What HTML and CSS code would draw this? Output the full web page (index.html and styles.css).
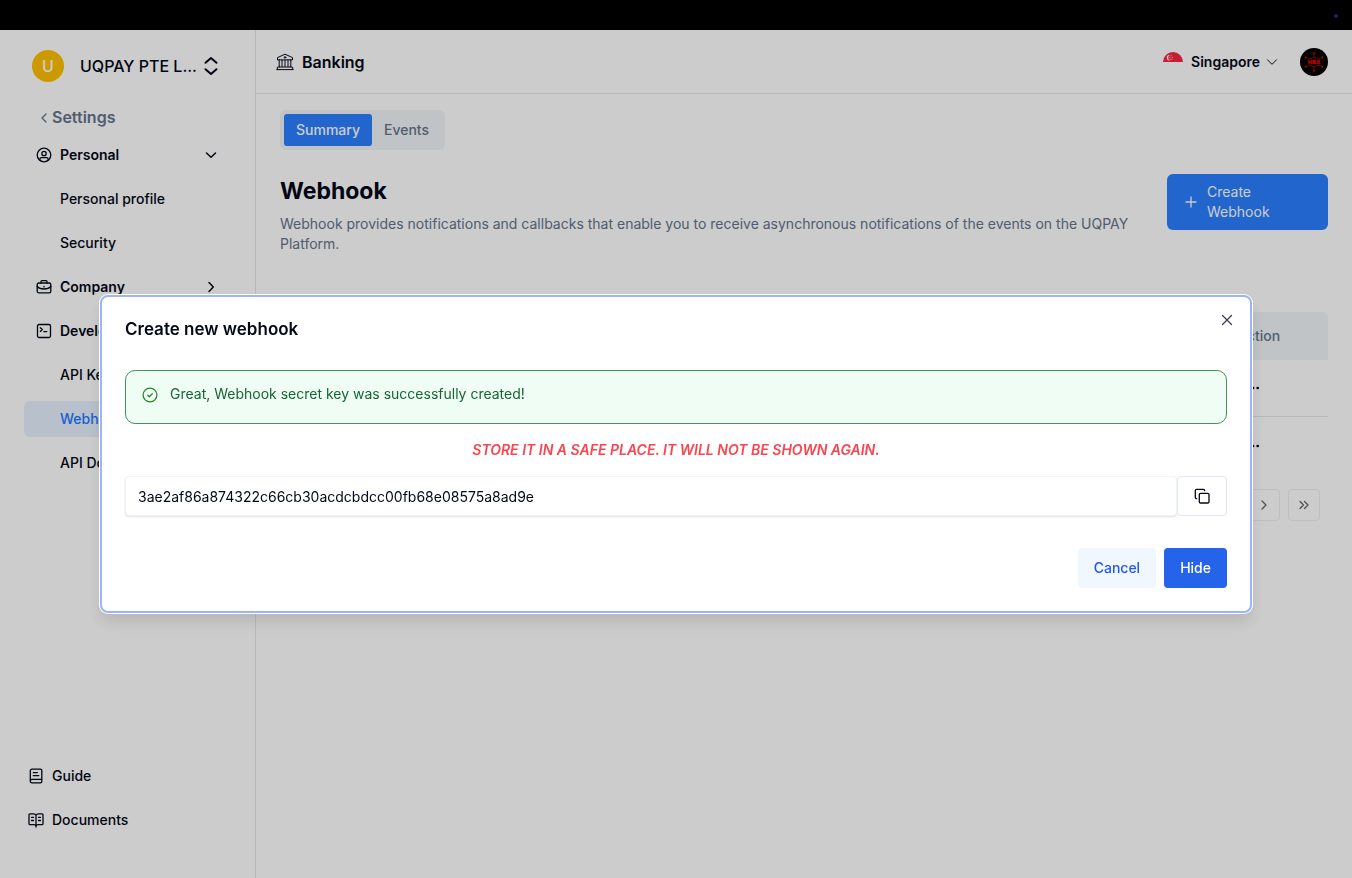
FILE: index.html
```html
<!DOCTYPE html>
<html lang="en">
<head>
<meta charset="utf-8">
<meta name="viewport" content="width=device-width, initial-scale=1">
<title>Webhook</title>
<link rel="stylesheet" href="styles.css">
</head>
<body>
<div class="topbar"><span class="topbar-dot"></span></div>
<div class="shell">
	<aside class="sidebar">
		<button type="button" class="org">
			<span class="org-avatar">U</span>
			<span class="org-name">UQPAY PTE L...</span>
			<svg class="icon org-sort" viewBox="0 0 16 20"><path d="M2.500 6.800L8 2l5.500 4.800M2.500 13.200L8 18l5.500-4.800"/></svg>
		</button>
		<a class="back" href="#">
			<svg class="icon back-icon" viewBox="0 0 8 12"><path d="M6 2L2 6l4 4"/></svg>
			Settings
		</a>
		<nav class="menu">
			<a class="menu-item menu-group" href="#">
				<svg class="icon" viewBox="0 0 16 16"><circle cx="8" cy="8" r="6.8"/><circle cx="8" cy="6.5" r="2.2"/><path d="M3.8 13v-.6c0-1 .8-1.8 1.8-1.8h4.8c1 0 1.8.8 1.8 1.8v.6"/></svg>
				<span class="menu-label">Personal</span>
				<svg class="icon menu-arrow" viewBox="0 0 16 16"><path d="M3.500 6L8 10.300 12.500 6"/></svg>
			</a>
			<a class="menu-item menu-sub" href="#">Personal profile</a>
			<a class="menu-item menu-sub" href="#">Security</a>
			<a class="menu-item menu-group" href="#">
				<svg class="icon" viewBox="0 0 16 16"><rect x="1.2" y="4" width="13.6" height="9.8" rx="1.6"/><path d="M5 4V2.6c0-.6.4-1 1-1h4c.6 0 1 .4 1 1V4M1.2 7.5c1.5 1.7 4 2.5 6.8 2.5s5.3-.8 6.8-2.5M8 7.500v.4"/></svg>
				<span class="menu-label">Company</span>
				<svg class="icon menu-arrow" viewBox="0 0 16 16"><path d="M6 3.500L10.300 8 6 12.500"/></svg>
			</a>
			<a class="menu-item menu-group" href="#">
				<svg class="icon" viewBox="0 0 16 16"><rect x="1.5" y="1.5" width="13" height="13" rx="1.5"/><path d="M4.300 4.800l2 1.800-2 1.800M7.800 8.600h3"/></svg>
				<span class="menu-label">Developer</span>
				<svg class="icon menu-arrow" viewBox="0 0 16 16"><path d="M3.500 6L8 10.300 12.500 6"/></svg>
			</a>
			<a class="menu-item menu-sub" href="#">API Keys</a>
			<a class="menu-item menu-sub active" href="#">Webhook</a>
			<a class="menu-item menu-sub" href="#">API Docs</a>
		</nav>
		<nav class="links">
			<a class="link" href="#">
				<svg class="icon" viewBox="0 0 16 16"><path d="M4 1.2h8.500c.8 0 1.300.5 1.300 1.300v11c0 .8-.5 1.300-1.300 1.300H4c-1 0-1.700-.7-1.700-1.600V2.900c0-1 .7-1.700 1.700-1.700zM2.300 13c0-1 .7-1.600 1.700-1.600h9.800M5.300 4.600h4M5.300 7.600h5.500"/></svg>
				Guide
			</a>
			<a class="link" href="#">
				<svg class="icon" viewBox="0 0 16 16"><path d="M8 3.200C7.500 2.300 6.700 1.800 5.600 1.800H2c-.6 0-1 .4-1 1v8.900c0 .6.4 1 1 1h4c1 0 1.600.4 2 1.300.4-.9 1-1.300 2-1.300h4c.6 0 1-.4 1-1V2.800c0-.6-.4-1-1-1h-3.600C9.300 1.800 8.500 2.300 8 3.200zM8 3.200V15M3.500 5.300h2M3.500 8.500h2M10.500 5.300h2M10.500 8.500h2"/></svg>
				Documents
			</a>
		</nav>
	</aside>
	<div class="page">
		<header class="header">
			<svg class="icon bank-icon" viewBox="0 0 18 18"><path d="M1.500 6.500V4.600L9 1.200l7.500 3.400v1.900zM3.200 6.500V14M6 7v6.500M9 7v6.500M12 7v6.500M14.800 6.500V14M2 14h14M.8 16.600h16.400M1.300 14.500v2M16.700 14.500v2"/><circle cx="9" cy="4.400" r=".8"/></svg>
			<span class="header-title">Banking</span>
			<button type="button" class="country">
				<svg class="flag" viewBox="0 0 20 20">
					<circle cx="10" cy="10" r="10" fill="#fff"/>
					<path d="M0 10a10 10 0 0 1 20 0z" fill="#f8263f"/>
					<path d="M6.800 2.800a3 3 0 1 0 0 6 3.600 3.600 0 0 1 0-6z" fill="#fff"/>
					<g fill="#fff"><circle cx="8" cy="3.800" r=".5"/><circle cx="6.800" cy="5.500" r=".5"/><circle cx="9.300" cy="5.500" r=".5"/><circle cx="7.200" cy="7.200" r=".5"/><circle cx="8.900" cy="7.200" r=".5"/></g>
				</svg>
				Singapore
				<svg class="icon country-arrow" viewBox="0 0 12 12"><path d="M1.500 3.800L6 8.300l4.500-4.500"/></svg>
			</button>
			<a class="user" href="#" aria-label="Account">
				<svg viewBox="0 0 28 28">
					<circle cx="14" cy="14" r="14" fill="#000"/>
					<g fill="none" stroke="#e60000" stroke-width=".7">
						<path d="M14 5.500V9M14 19v3.500M6 9.500l3 1.700M22 9.500l-3 1.700M6 18.500l3-1.700M22 18.500l-3-1.700"/>
						<path d="M9 11.200L14 9l5 2.200M9 16.800l5 2.200 5-2.200"/>
						<path stroke-width="1.300" d="M9 12v4M11.800 12v4M9 14h2.800M16 12.600h-2.500v2.800H16M13.500 14h2.300M17 12l3 4M20 12l-3 4"/>
					</g>
					<g fill="#e60000"><circle cx="14" cy="5.200" r="1"/><circle cx="14" cy="22.800" r="1"/><circle cx="5.700" cy="9.300" r="1"/><circle cx="22.300" cy="9.300" r="1"/><circle cx="5.700" cy="18.700" r="1"/><circle cx="22.300" cy="18.700" r="1"/></g>
				</svg>
			</a>
		</header>
		<main class="main">
			<div class="tabs" role="tablist">
				<button type="button" class="tab selected" role="tab" aria-selected="true">Summary</button>
				<button type="button" class="tab" role="tab" aria-selected="false">Events</button>
			</div>
			<div class="intro">
				<div class="intro-text">
					<h1>Webhook</h1>
					<p>Webhook provides notifications and callbacks that enable you to receive asynchronous notifications of the events on the UQPAY Platform.</p>
				</div>
				<button type="button" class="create">
					<svg class="icon" viewBox="0 0 16 16"><path d="M8 3v10M3 8h10"/></svg>
					<span>Create<br>Webhook</span>
				</button>
			</div>
			<table class="list">
				<thead>
					<tr><th></th><th class="action">Action</th></tr>
				</thead>
				<tbody>
					<tr><td></td><td class="action"><button type="button" class="more" aria-label="More"><svg viewBox="0 0 24 24"><circle cx="5" cy="12" r="2"/><circle cx="12" cy="12" r="2"/><circle cx="19" cy="12" r="2"/></svg></button></td></tr>
					<tr><td></td><td class="action"><button type="button" class="more" aria-label="More"><svg viewBox="0 0 24 24"><circle cx="5" cy="12" r="2"/><circle cx="12" cy="12" r="2"/><circle cx="19" cy="12" r="2"/></svg></button></td></tr>
				</tbody>
			</table>
			<div class="pager">
				<button type="button" class="pager-btn" aria-label="Next page"><svg class="icon" viewBox="0 0 16 16"><path d="M6 4l4 4-4 4"/></svg></button>
				<button type="button" class="pager-btn" aria-label="Last page"><svg class="icon" viewBox="0 0 16 16"><path d="M4 4.500L7.500 8 4 11.500M8.500 4.500L12 8l-3.500 3.500"/></svg></button>
			</div>
		</main>
	</div>
</div>

<div class="overlay">
	<div class="dialog" role="dialog" aria-labelledby="dialog-title">
		<button type="button" class="close" aria-label="Close"><svg class="icon" viewBox="0 0 16 16"><path d="M3.500 3.500l9 9M12.500 3.500l-9 9"/></svg></button>
		<h2 id="dialog-title">Create new webhook</h2>
		<div class="alert">
			<svg class="icon" viewBox="0 0 16 16"><circle cx="8" cy="8" r="6.900"/><path d="M5.800 8.200l1.500 1.500 3-3"/></svg>
			<p>Great, Webhook secret key was successfully created!</p>
		</div>
		<p class="warning">STORE IT IN A SAFE PLACE. IT WILL NOT BE SHOWN AGAIN.</p>
		<div class="secret">
			<input type="text" class="secret-key" aria-label="Webhook secret key" value="3ae2af86a874322c66cb30acdcbdcc00fb68e08575a8ad9e" readonly>
			<button type="button" class="copy" aria-label="Copy"><svg class="icon" viewBox="0 0 16 16"><rect x="5.300" y="5.300" width="9.700" height="9.700" rx="1.300"/><path d="M2.700 10.700C2 10.700 1.300 10 1.300 9.300V2.700c0-.7.7-1.400 1.400-1.400h6.600c.7 0 1.400.7 1.400 1.400"/></svg></button>
		</div>
		<div class="buttons">
			<button type="button" class="btn cancel">Cancel</button>
			<button type="button" class="btn hide">Hide</button>
		</div>
	</div>
</div>
</body>
</html>
```
FILE: styles.css
```css
* {
	box-sizing: border-box;
}

body {
	display: flex;
	flex-direction: column;
	min-height: 100vh;
	margin: 0;
	background: #fff;
	color: #020817;
	font-family: Inter, "Liberation Sans", sans-serif;
	font-size: 14px;
	line-height: 20px;
}

h1, h2, p {
	margin: 0;
}

a {
	color: inherit;
	text-decoration: none;
}

button {
	padding: 0;
	border: 0;
	background: none;
	color: inherit;
	font: inherit;
	cursor: pointer;
}

svg {
	display: block;
	flex-shrink: 0;
}

.icon {
	width: 16px;
	height: 16px;
	fill: none;
	stroke: currentColor;
	stroke-width: 1.3;
	stroke-linecap: round;
	stroke-linejoin: round;
}

/* top strip */
.topbar {
	display: flex;
	align-items: center;
	justify-content: flex-end;
	height: 30px;
	padding: 2px 14px 0 0;
	background: #000;
}

.topbar-dot {
	width: 4px;
	height: 4px;
	border-radius: 50%;
	background: #2b1d66;
}

.shell {
	display: flex;
	flex: 1;
}

/* sidebar */
.sidebar {
	display: flex;
	flex-direction: column;
	width: 256px;
	padding: 20px 24px 40px;
	border-right: 1px solid #e2e8f0;
}

.org {
	display: flex;
	align-items: center;
	gap: 16px;
	height: 32px;
	padding: 0 12px 0 8px;
	font-size: 16px;
	font-weight: 500;
	text-align: left;
}

.org-avatar {
	flex-shrink: 0;
	width: 32px;
	height: 32px;
	border-radius: 50%;
	background: #ffc000;
	color: #fff;
	line-height: 32px;
	text-align: center;
}

.org-name {
	flex: 1;
	min-width: 0;
	white-space: nowrap;
}

.org-sort {
	height: 20px;
	margin-left: -8px;
	stroke-width: 2;
}

.back {
	display: flex;
	align-items: center;
	gap: 4px;
	margin-top: 24px;
	padding-left: 16px;
	color: #64748b;
	font-size: 16px;
	font-weight: 600;
	line-height: 23px;
}

.back-icon {
	width: 8px;
	height: 12px;
}

.menu {
	display: flex;
	flex-direction: column;
	gap: 8px;
	margin-top: 8px;
}

.menu-item {
	display: flex;
	align-items: center;
	gap: 8px;
	height: 36px;
	padding: 0 12px;
	border-radius: 6px;
	font-weight: 500;
}

.menu-group {
	font-weight: 600;
}

.menu-label {
	flex: 1;
}

.menu-arrow {
	stroke-width: 1.5;
}

.menu-sub {
	padding-left: 36px;
}

.menu-item.active {
	background: #e6f0ff;
	color: #2079ff;
}

.links {
	display: flex;
	flex-direction: column;
	gap: 8px;
	margin-top: auto;
}

.link {
	display: flex;
	align-items: center;
	gap: 8px;
	height: 36px;
	padding-left: 4px;
	font-weight: 500;
}

/* page */
.page {
	flex: 1;
	min-width: 0;
}

.header {
	display: flex;
	align-items: center;
	height: 64px;
	padding: 0 24px 0 20px;
	border-bottom: 1px solid #e2e8f0;
}

.bank-icon {
	width: 18px;
	height: 18px;
	stroke-width: 1;
}

.header-title {
	flex: 1;
	margin-left: 8px;
	font-size: 16px;
	font-weight: 600;
}

.country {
	display: flex;
	align-items: center;
	gap: 8px;
	font-weight: 600;
}

.flag {
	width: 20px;
	height: 20px;
}

.country-arrow {
	width: 12px;
	height: 12px;
	margin-left: -2px;
	stroke-width: 1;
}

.user {
	width: 28px;
	height: 28px;
	margin-left: 22px;
}

.main {
	padding: 16px 24px;
}

.tabs {
	display: inline-flex;
	height: 40px;
	padding: 4px;
	border-radius: 6px;
	background: #f1f5f9;
}

.tab {
	padding: 0 12px;
	border-radius: 3px;
	color: #64748b;
	font-weight: 500;
}

.tab.selected {
	background: #2b7fff;
	color: #fff;
}

.intro {
	display: grid;
	grid-template-columns: 1fr 161px;
	gap: 16px;
	margin-top: 18px;
}

.intro-text h1 {
	margin-top: 6px;
	font-size: 23px;
	font-weight: 700;
	line-height: 34px;
}

.intro-text p {
	margin-top: 6px;
	color: #64748b;
}

.create {
	display: flex;
	align-self: start;
	align-items: center;
	gap: 8px;
	margin-top: 6px;
	padding: 8px 16px;
	border-radius: 6px;
	background: #2b7fff;
	color: #fff;
	text-align: left;
}

.list {
	width: 100%;
	margin-top: 58px;
	border-collapse: separate;
	border-spacing: 0;
}

.list th {
	height: 48px;
	padding: 0 16px;
	background: #f1f5f9;
	color: #64748b;
	font-weight: 500;
	text-align: left;
}

.list th:last-child {
	border-top-right-radius: 6px;
}

.list td {
	height: 57px;
	padding: 0 16px;
	border-bottom: 1px solid #e2e8f0;
}

.list tr:last-child td {
	border-bottom: 0;
}

.list .action {
	width: 107px;
}

.more {
	display: block;
	padding: 8px;
}

.more svg {
	width: 16px;
	height: 16px;
}

.pager {
	display: flex;
	justify-content: flex-end;
	gap: 8px;
	margin-top: 15px;
	padding-right: 8px;
}

.pager-btn {
	display: flex;
	align-items: center;
	justify-content: center;
	width: 32px;
	height: 32px;
	border: 1px solid #eeeff2;
	border-radius: 4px;
	color: #666;
}

/* dialog */
.overlay {
	position: fixed;
	inset: 30px 0 0;
	display: flex;
	align-items: center;
	justify-content: center;
	background: rgba(0, 0, 0, 0.2);
}

.dialog {
	position: relative;
	width: 90%;
	max-width: 1152px;
	padding: 23px;
	border: 2px solid #9bb4fb;
	border-radius: 8px;
	background: #fff;
	box-shadow: 0 0 0 1px #fff, 0 10px 15px rgba(0, 0, 0, 0.1);
}

.dialog h2 {
	font-size: 17px;
	font-weight: 600;
	line-height: 18px;
}

.close {
	position: absolute;
	top: 15px;
	right: 15px;
	color: #3c4150;
}

.alert {
	display: flex;
	gap: 12px;
	height: 54px;
	margin-top: 32px;
	padding: 13px 16px;
	border: 1px solid #3f9658;
	border-radius: 10px;
	background: #f0fdf4;
	color: #166534;
}

.alert .icon {
	margin-top: 3px;
	color: #22882c;
}

.warning {
	margin-top: 16px;
	color: #fb4450;
	font-style: italic;
	font-weight: 600;
	text-align: center;
}

.secret {
	display: flex;
	margin-top: 16px;
}

.secret-key {
	flex: 1;
	height: 40px;
	padding: 0 12px;
	border: 1px solid #f1f3f5;
	border-radius: 4px;
	background: #fff;
	box-shadow: 0 1px 2px rgba(0, 0, 0, 0.12);
	color: #020817;
	font: inherit;
	outline: none;
}

.copy {
	display: flex;
	align-items: center;
	justify-content: center;
	width: 50px;
	height: 40px;
	border: 1px solid #e2e8f0;
	border-radius: 4px;
}

.buttons {
	display: flex;
	justify-content: flex-end;
	gap: 8px;
	margin-top: 32px;
}

.btn {
	height: 40px;
	padding: 0 16px;
	border-radius: 4px;
	font-weight: 500;
}

.cancel {
	background: #f0f7ff;
	color: #2257f0;
}

.hide {
	background: #2563eb;
	color: #fff;
}
```
